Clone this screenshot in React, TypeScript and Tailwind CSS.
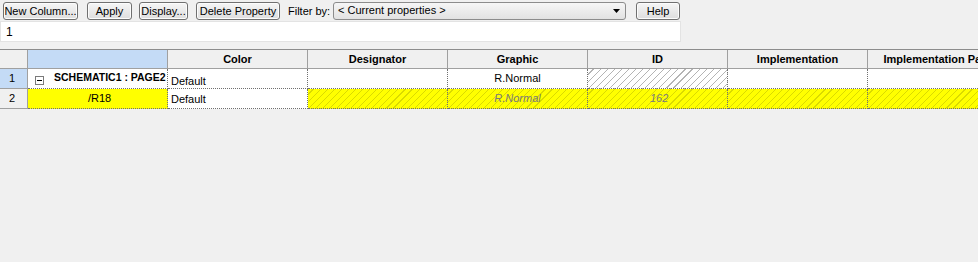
import React from "react";

const btn =
  "h-[18px] rounded-[3px] border border-[#707070] bg-[linear-gradient(#f6f6f6,#dedede)] text-[11px] leading-[16px] text-black flex items-center justify-center whitespace-nowrap shadow-[inset_0_0_0_1px_#fcfcfc]";

const hatchWhite =
  "bg-[repeating-linear-gradient(135deg,#ffffff_0px,#ffffff_3.5px,#b4b4b4_3.5px,#b4b4b4_4.3px,#ffffff_4.3px,#ffffff_5px)]";
const hatchYellow =
  "bg-[repeating-linear-gradient(135deg,#ffff00_0px,#ffff00_3.5px,#dada00_3.5px,#dada00_4.3px,#ffff00_4.3px,#ffff00_5px)]";

const headers = ["Color", "Designator", "Graphic", "ID", "Implementation", "Implementation Path"];

export default function App() {
  return (
    <div
      className="w-[978px] h-[262px] bg-[#f0f0f0] overflow-hidden text-[11px] text-black"
      style={{ fontFamily: '"Liberation Sans", Arial, sans-serif' }}
    >
      {/* toolbar */}
      <div className="flex items-center h-[20px] pt-[1px] pl-[3px]">
        <div className={`${btn} w-[75px]`}>New Column...</div>
        <div className={`${btn} w-[45px] ml-[9px]`}>Apply</div>
        <div className={`${btn} w-[49px] ml-[7px]`}>Display...</div>
        <div className={`${btn} w-[84px] ml-[8px]`}>Delete Property</div>
        <div className="ml-[8px] w-[45px] text-[11px] leading-[16px] whitespace-nowrap">Filter by:</div>
        <div className="w-[293px] h-[18px] rounded-[3px] border border-[#8c8c8c] bg-[linear-gradient(#f6f6f6,#e2e2e2)] flex items-center pl-[4px] pr-[5px] text-[11px] whitespace-nowrap">
          <span className="flex-1">&lt; Current properties &gt;</span>
          <svg width="7" height="4" viewBox="0 0 7 4">
            <path d="M0 0 L7 0 L3.5 4 Z" fill="#000" />
          </svg>
        </div>
        <div className={`${btn} w-[44px] ml-[10px]`}>Help</div>
      </div>
      {/* text box */}
      <div className="mt-[1px] w-[681px] h-[21px] bg-white border border-[#e3e3e3] flex items-center pl-[5px] text-[12px]">
        1
      </div>
      {/* grid */}
      <div className="mt-[7px] border-t border-[#8c8c8c] w-[978px]">
        <div className="flex">
          <div className="w-[28px] h-[19px] shrink-0 bg-[#f0f0f0] border-r border-b border-[#a0a0a0]" />
          <div className="w-[140px] h-[19px] shrink-0 bg-[#c4dbf6] border-r border-b border-[#a0a0a0]" />
          {headers.map((h) => (
            <div
              key={h}
              className="w-[140px] h-[19px] shrink-0 bg-[#f0f0f0] border-r border-b border-[#a0a0a0] font-bold flex items-center justify-center whitespace-nowrap overflow-hidden"
            >
              {h}
            </div>
          ))}
        </div>
        {/* row 1 */}
        <div className="flex h-[20px]">
          <div className="w-[28px] shrink-0 bg-[#c4dbf6] border-r border-b border-[#a0a0a0] flex items-center pl-[9px]">1</div>
          <div className="w-[140px] shrink-0 bg-white border-r border-b border-dotted border-[#707070] flex items-center">
            <div className="ml-[7px] mt-[4px] w-[9px] h-[9px] border border-[#7a7a7a] bg-white flex items-center justify-center">
              <div className="w-[5px] h-[1px] bg-black" />
            </div>
            <span className="ml-[10px] font-bold whitespace-nowrap mb-[2px] text-[10.5px]">SCHEMATIC1 : PAGE2</span>
          </div>
          <div className="w-[140px] shrink-0 bg-white border-r border-b border-dotted border-[#707070] pl-[3px] pt-[4px]">Default</div>
          <div className="w-[140px] shrink-0 bg-white border-r border-b border-dotted border-[#707070]" />
          <div className="w-[140px] shrink-0 bg-white border-r border-b border-dotted border-[#707070] text-center pt-[1px]">R.Normal</div>
          <div className={`w-[140px] shrink-0 ${hatchWhite} border-r border-b border-dotted border-[#707070]`} />
          <div className="w-[140px] shrink-0 bg-white border-r border-b border-dotted border-[#707070]" />
          <div className="w-[140px] shrink-0 bg-white border-r border-b border-dotted border-[#707070]" />
        </div>
        {/* row 2 */}
        <div className="flex h-[20px]">
          <div className="w-[28px] shrink-0 bg-[#f0f0f0] border-r border-b border-[#a0a0a0] flex items-center pl-[9px]">2</div>
          <div className="w-[140px] shrink-0 bg-[#ffff00] border-r border-b border-dotted border-[#707070] flex items-center pl-[60px]">/R18</div>
          <div className="w-[140px] shrink-0 bg-white border-r border-b border-dotted border-[#707070] flex items-center pl-[3px] pt-[1px]">Default</div>
          <div className={`w-[140px] shrink-0 ${hatchYellow} border-r border-b border-dotted border-[#707070]`} />
          <div className={`w-[140px] shrink-0 ${hatchYellow} border-r border-b border-dotted border-[#707070] flex items-center justify-center italic text-[#7a7a7a]`}>R.Normal</div>
          <div className={`w-[140px] shrink-0 ${hatchYellow} border-r border-b border-dotted border-[#707070] flex items-center pl-[62px] italic text-[#7a7a7a]`}>162</div>
          <div className={`w-[140px] shrink-0 ${hatchYellow} border-r border-b border-dotted border-[#707070]`} />
          <div className={`w-[140px] shrink-0 ${hatchYellow} border-r border-b border-dotted border-[#707070]`} />
        </div>
      </div>
    </div>
  );
}
